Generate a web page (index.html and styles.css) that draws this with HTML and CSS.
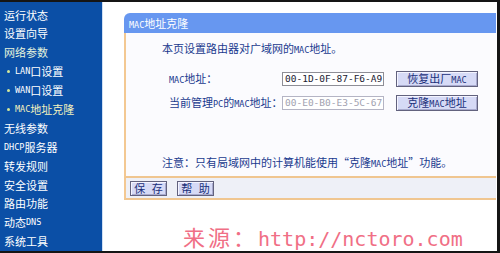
FILE: index.html
```html
<!DOCTYPE html>
<html lang="zh-CN">
<head>
<meta charset="utf-8">
<title>MAC地址克隆</title>
<link rel="stylesheet" href="styles.css">
</head>
<body>
<div class="frame">
  <nav class="sidebar">
    <div class="item">运行状态</div>
    <div class="item">设置向导</div>
    <div class="item open">网络参数</div>
    <div class="item sub"><i class="dot"></i><span class="en">LAN</span>口设置</div>
    <div class="item sub"><i class="dot"></i><span class="en">WAN</span>口设置</div>
    <div class="item sub active"><i class="dot"></i><span class="en">MAC</span>地址克隆</div>
    <div class="item">无线参数</div>
    <div class="item"><span class="en">DHCP</span>服务器</div>
    <div class="item">转发规则</div>
    <div class="item">安全设置</div>
    <div class="item">路由功能</div>
    <div class="item">动态<span class="en">DNS</span></div>
    <div class="item">系统工具</div>
  </nav>
  <main class="main">
    <section class="panel">
      <div class="panel-hd"><span class="en">MAC</span>地址克隆</div>
      <div class="panel-bd">
        <p class="desc">本页设置路由器对广域网的<span class="en">MAC</span>地址。</p>
        <div class="form">
          <label class="lbl"><span class="en">MAC</span>地址：</label>
          <div class="input">00-1D-0F-87-F6-A9</div>
          <button class="btn wide">恢复出厂<span class="en">MAC</span></button>
          <label class="lbl">当前管理<span class="en">PC</span>的<span class="en">MAC</span>地址：</label>
          <div class="input disabled">00-E0-B0-E3-5C-67</div>
          <button class="btn wide">克隆<span class="en">MAC</span>地址</button>
        </div>
        <p class="note">注意：只有局域网中的计算机能使用“克隆<span class="en">MAC</span>地址”功能。</p>
      </div>
      <div class="panel-ft">
        <button class="btn small">保 存</button>
        <button class="btn small">帮 助</button>
      </div>
    </section>
  </main>
</div>
<div class="watermark"><span class="wm-cn">来源：</span><span class="wm-en">http://nctoro.com</span></div>
</body>
</html>
```
FILE: styles.css
```css
html, body {
  margin: 0;
  padding: 0;
  background: #ffffff;
}
body {
  position: relative;
  width: 500px;
  height: 253px;
  overflow: hidden;
  font-family: "Noto Sans CJK SC", "Liberation Sans", sans-serif;
  font-size: 11px;
}
.en {
  font-family: "DejaVu Sans Mono", "Liberation Mono", monospace;
  font-size: 8.5px;
}
.frame {
  box-sizing: border-box;
  width: 500px;
  height: 253px;
  border-top: 2px solid #151515;
  border-right: 3px solid #151515;
  border-bottom: 2px solid #151515;
  display: flex;
  overflow: hidden;
}
.sidebar {
  width: 103px;
  flex: none;
  background: #0b4fa6;
  padding-top: 3.5px;
  border-right: 1px solid #cfdff3;
  box-sizing: border-box;
}
.item {
  height: 18.9px;
  line-height: 18.9px;
  padding-left: 4px;
  color: #ffffff;
  white-space: nowrap;
  display: flex;
  align-items: center;
}
.item.open {
  color: #e4f3dc;
}
.item.sub {
  padding-left: 7px;
}
.item.active {
  color: #f4f2be;
}
.dot {
  display: inline-block;
  width: 3px;
  height: 3px;
  border-radius: 50%;
  background: #d4e89a;
  margin-right: 5px;
}
.main {
  flex: 1;
  padding: 11px 0 0 21px;
  background: #ffffff;
}
.panel {
  width: 372px;
}
.panel-hd {
  height: 20px;
  line-height: 20px;
  background: #6797f0;
  border-top-left-radius: 6px;
  color: #ffffff;
  padding-left: 5px;
}
.panel-bd {
  box-sizing: border-box;
  height: 145px;
  border-left: 2px solid #f3c892;
  border-bottom: 2px solid #f0c690;
  background: #fbfbfe;
  padding-top: 8px;
  color: #1a3a8e;
}
.desc {
  margin: 0 0 0 36px;
  line-height: 14px;
}
.form {
  margin: 14px 0 0 43px;
  display: grid;
  grid-template-columns: 113px 114px 82px;
  grid-template-rows: 16px 16px;
  row-gap: 8px;
  align-items: center;
}
.lbl {
  white-space: nowrap;
  line-height: 16px;
}
.input {
  box-sizing: border-box;
  width: 102px;
  height: 14px;
  border: 1px solid #8e8e96;
  background: #ffffff;
  color: #222233;
  font-family: "DejaVu Sans Mono", "Liberation Mono", monospace;
  font-size: 9.5px;
  line-height: 12px;
  padding-left: 2px;
  white-space: nowrap;
  overflow: hidden;
}
.input.disabled {
  border-color: #b4b4c4;
  color: #a2a2b0;
}
.btn {
  box-sizing: border-box;
  margin: 0;
  padding: 0;
  border: 1px solid #62627e;
  box-shadow: inset 1px 1px 0 #f4f4ff, inset -1px -1px 0 #a8aace;
  background: #d6daf6;
  color: #1a2f7a;
  font-family: "Noto Sans CJK SC", sans-serif;
  font-size: 11px;
  line-height: 13px;
  white-space: nowrap;
}
.btn.wide {
  width: 82px;
  height: 16px;
}
.note {
  margin: 44px 0 0 36px;
  line-height: 14px;
}
.panel-ft {
  box-sizing: border-box;
  height: 22px;
  border-left: 2px solid #f3c892;
  border-bottom: 2px solid #f0c690;
  background: #eef0f7;
  padding: 3px 0 0 4px;
  display: flex;
  gap: 10px;
}
.btn.small {
  width: 37px;
  height: 15px;
  letter-spacing: 2px;
  padding-left: 2px;
}
.watermark {
  position: absolute;
  left: 183px;
  top: 222px;
  height: 28px;
  color: #ef6078;
  white-space: nowrap;
  line-height: 28px;
  opacity: 0.9;
}
.wm-cn {
  font-family: "Noto Sans CJK SC", sans-serif;
  font-size: 22px;
  letter-spacing: 3px;
}
.wm-en {
  font-family: "DejaVu Sans Mono", monospace;
  font-size: 20px;
}
```
